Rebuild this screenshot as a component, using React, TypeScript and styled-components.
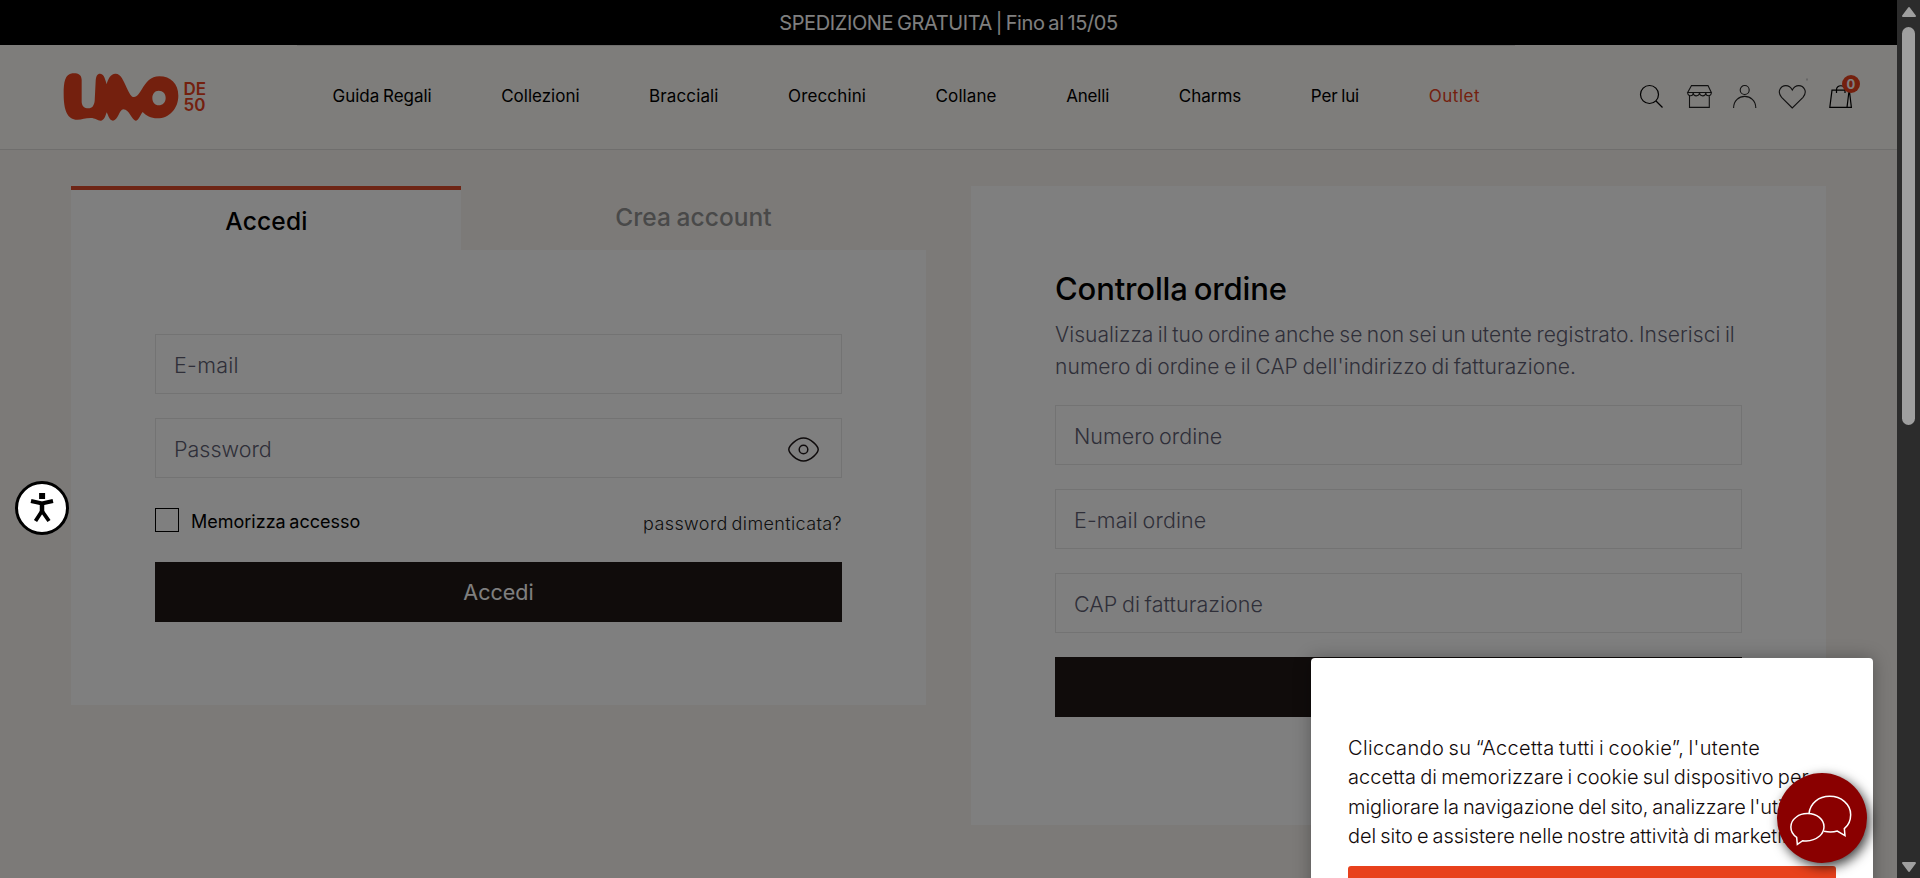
import React from "react";
import styled, { createGlobalStyle } from "styled-components";

const ORANGE = "#e8411c";

const GlobalStyle = createGlobalStyle`
  * { box-sizing: border-box; }
  body { margin: 0; overflow: hidden; font-family: Inter, "Liberation Sans", sans-serif; color: #000; }
  h1, h2, p { margin: 0; font-weight: 500; }
  svg { display: block; overflow: visible; }
`;

const Screen = styled.div`
  display: grid;
  grid-template-columns: 1897px 23px;
  width: 1920px;
  height: 878px;
  overflow: hidden;
`;

const Page = styled.div`
  position: relative;
  height: 878px;
  background: #f8f5f1;
  overflow: hidden;
`;

const PromoBar = styled.div`
  display: flex;
  align-items: center;
  justify-content: center;
  height: 45px;
  background: #000;
  color: #fff;
  font-size: 20px;
  font-weight: 400;
  letter-spacing: -0.38px;
  word-spacing: -1.5px;
`;

const Header = styled.header`
  display: flex;
  align-items: stretch;
  height: 105px;
  padding-left: 50px;
  background: #fdfaf6;
  border-bottom: 1px solid #dedcda;
`;

const LogoLink = styled.a`
  width: 247px;
  padding-top: 15px;
`;

const Nav = styled.nav`
  display: flex;
  align-items: center;
  gap: 69.5px;
  width: 1218px;
  padding: 0 0 3px 35.5px;
  border-top: 1px solid #dedcda;
`;

const NavLink = styled.a<{ $track?: number; $accent?: boolean }>`
  font-size: 17px;
  font-weight: 400;
  white-space: nowrap;
  word-spacing: -1px;
  letter-spacing: ${(p) => p.$track ?? 0}px;
  color: ${(p) => (p.$accent ? ORANGE : "#000")};
`;

const Tools = styled.div`
  display: grid;
  grid-template-columns: 47px 46px 46px 50px 24px;
  margin-left: 125px;
  padding-top: 40px;
`;

const BagHolder = styled.div`
  position: relative;
`;

const Badge = styled.span`
  position: absolute;
  top: -10px;
  left: 13px;
  display: flex;
  align-items: center;
  justify-content: center;
  width: 18px;
  height: 18px;
  border-radius: 50%;
  background: ${ORANGE};
  color: #fff;
  font-size: 13px;
  font-weight: 700;
`;

const Main = styled.main`
  display: grid;
  grid-template-columns: 855px 855px;
  gap: 45px;
  align-items: start;
  padding: 36px 71px 0;
`;

const Tabs = styled.div`
  display: grid;
  grid-template-columns: 390px 465px;
  height: 64px;
`;

const Tab = styled.button<{ $active?: boolean }>`
  display: flex;
  align-items: center;
  justify-content: center;
  border: 0;
  border-top: ${(p) => (p.$active ? `4px solid #dc4a2b` : "0")};
  padding: ${(p) => (p.$active ? "1px 0 0 1px" : "0 0 2px")};
  background: ${(p) => (p.$active ? "#fff" : "transparent")};
  color: ${(p) => (p.$active ? "#000" : "#939393")};
  font: 500 24.5px Inter, sans-serif;
  letter-spacing: ${(p) => (p.$active ? 0.2 : 0.05)}px;
  word-spacing: -1px;
`;

const LoginCard = styled.form`
  display: flex;
  flex-direction: column;
  height: 455px;
  padding: 84px 84px 0;
  background: #fff;
`;

const OrderCard = styled.form`
  display: flex;
  flex-direction: column;
  height: 639px;
  padding: 84px 84px 0;
  background: #fff;
`;

const Field = styled.label`
  display: flex;
  align-items: center;
  height: 60px;
  margin-bottom: 24px;
  padding: 2px 22.5px 0 18px;
  border: 1px solid #e6e6e6;
`;

const Input = styled.input<{ $track?: number }>`
  flex: 1;
  min-width: 0;
  padding: 0;
  border: 0;
  outline: 0;
  background: none;
  font: 300 21.5px Inter, sans-serif;
  letter-spacing: ${(p) => p.$track ?? 0}px;
  word-spacing: -1.5px;
  &::placeholder { color: #5e5e72; opacity: 1; }
`;

const Options = styled.div`
  display: flex;
  align-items: center;
  height: 30px;
  margin: 4px 0 26px;
  font-size: 18px;
`;

const Checkbox = styled.span`
  width: 24px;
  height: 24px;
  margin: 0 12px 3px 0;
  border: 1px solid #000;
`;

const Remember = styled.span`
  padding-top: 1px;
  font-weight: 400;
  letter-spacing: 0;
  word-spacing: -1.5px;
`;

const Forgot = styled.a`
  margin-left: auto;
  padding-top: 4px;
  color: #222;
  font-weight: 300;
  letter-spacing: 0.38px;
  word-spacing: -1.5px;
`;

const Submit = styled.button`
  flex: none;
  height: 60px;
  border: 0;
  background: #201816;
  color: #fff;
  font: 400 21.5px Inter, sans-serif;
`;

const Title = styled.h1`
  height: 48px;
  font-size: 31px;
  line-height: 38px;
  font-weight: 500;
  letter-spacing: -0.15px;
  word-spacing: -2px;
`;

const Intro = styled.p`
  height: 87px;
  padding-top: 1px;
  color: #5e5e72;
  font-size: 21px;
  font-weight: 300;
  line-height: 32px;
`;

const Line = styled.span<{ $track: number }>`
  display: block;
  white-space: nowrap;
  word-spacing: -1.5px;
  letter-spacing: ${(p) => p.$track}px;
`;

const Overlay = styled.div`
  position: absolute;
  inset: 0;
  background: rgba(0, 0, 0, 0.5);
`;

const CookieBanner = styled.section`
  position: absolute;
  left: 1311px;
  top: 658px;
  width: 562px;
  height: 260px;
  padding: 76px 37px 0;
  border-radius: 4px 4px 0 0;
  background: #fff;
  box-shadow: 0 0 18px rgba(0, 0, 0, 0.3);
`;

const CookieText = styled.p`
  height: 132px;
  color: #120a0a;
  font-size: 20px;
  font-weight: 300;
  line-height: 29.3px;
`;

const CookieAccept = styled.button`
  display: block;
  width: 488px;
  height: 50px;
  border: 0;
  border-radius: 3px;
  background: ${ORANGE};
`;

const ChatButton = styled.button`
  position: absolute;
  left: 1777px;
  top: 773px;
  width: 90px;
  height: 90px;
  padding: 0;
  border: 0;
  border-radius: 50%;
  background: #8a0000;
  box-shadow: 3px 4px 12px rgba(0, 0, 0, 0.75);
`;

const AccessButton = styled.button`
  position: absolute;
  left: 15px;
  top: 481px;
  width: 54px;
  height: 54px;
  padding: 0;
  border: 3px solid #000;
  border-radius: 50%;
  background: #fff;
`;

const Scrollbar = styled.div`
  display: flex;
  flex-direction: column;
  align-items: center;
  justify-content: space-between;
  padding: 6px 0 5px;
  background: #2c2c2c;
`;

const ScrollTop = styled.div`
  display: flex;
  flex-direction: column;
  align-items: center;
  gap: 9px;
`;

const Thumb = styled.div`
  width: 13px;
  height: 398px;
  border-radius: 7px;
  background: #9f9f9f;
`;

const LogoRow = styled.span`
  display: flex;
`;

const LogoSuffix = styled.span`
  display: grid;
  grid-template-rows: 15.5px 15.5px;
  align-content: start;
  padding: 22px 0 0 1px;
  color: ${ORANGE};
  font-size: 17px;
  font-weight: 600;
  line-height: 15px;
`;

const Logo = () => (
  <LogoRow>
    <svg width="132.5" height="70" viewBox="0 0 397.5 210" fill={ORANGE}>
      <path
        fillRule="evenodd"
        d="M41 101C41 66 45 43 67 40C84 39 94 43 95 59L95 126C96 139 103 145 115 145C127 145 132 137 134 123L137 63C138 47 142 41 150 41C160 41 164 51 170 73C174 56 182 42 196 41C212 40 220 61 230 83C238 99 243 111 252 111C262 111 268 99 276 87C288 67 302 49 328 49C362 49 385 71 385 107C385 145 358 175 322 175C302 175 288 167 278 156C270 166 266 182 257 182C246 182 238 148 220 148C208 148 204 182 189 182C178 182 175 166 170 157C166 169 162 182 152 182C142 182 136 174 122 174C106 174 96 179 82 179C52 179 41 151 41 101ZM326 92C314 92 307 102 307 114C307 127 315 136 326 136C338 136 347 127 347 114C347 101 339 92 326 92Z"
      />
    </svg>
    <LogoSuffix><span>DE</span><span>50</span></LogoSuffix>
  </LogoRow>
);

const SearchIcon = () => (
  <svg width="24" height="24" fill="none" stroke="#000" strokeWidth="1.2">
    <circle cx="9.5" cy="9.5" r="9" />
    <path d="M16 16L22.5 22.5" />
  </svg>
);

const StoreIcon = () => (
  <svg width="26" height="24" fill="none" stroke="#222" strokeWidth="1.1">
    <path d="M4.5.6H21L24.3 7.5H.7ZM2.5 10V22.4H22.3V10M.7 7.5C.5 11.8 6 11.8 6.2 8C6.5 11.8 12 11.8 12.5 8C13 11.8 18.5 11.8 18.8 8C19 11.8 24.5 11.8 24.3 7.5" />
  </svg>
);

const UserIcon = () => (
  <svg width="24" height="24" fill="none" stroke="#222" strokeWidth="1.1">
    <circle cx="11.7" cy="5" r="4.5" />
    <path d="M.6 23C.6 7.5 22.8 7.5 22.8 23" />
  </svg>
);

const HeartIcon = () => (
  <svg width="27" height="24" fill="none" stroke="#222" strokeWidth="1.1">
    <path d="M13.3 23L2.6 12.3C-2.5 6.5 2 .6 6.8.6C10 .6 11.8 2 13.3 5C14.8 2 16.6.6 19.8.6C24.6.6 29 6.5 24 12.3Z" />
    <path d="M27 -5.5h2" stroke="#ccc" strokeWidth="2" />
  </svg>
);

const BagIcon = () => (
  <svg width="24" height="24" fill="none" stroke="#000" strokeWidth="1.2">
    <path d="M3 5.2H20.3L22.4 22.4H.8ZM20 6L18 22.4M7.5 8V4.5C7.5-.5 16-.5 16 4.5V8" />
  </svg>
);

const EyeIcon = () => (
  <svg width="31" height="25" fill="none" stroke="#1e1718" strokeWidth="1.5">
    <path d="M.8 12.5C.8 9.5 8 1 15.5 1S30.2 9.5 30.2 12.5S23 24 15.5 24S.8 15.5.8 12.5Z" />
    <circle cx="15.5" cy="12.5" r="4.3" />
  </svg>
);

const ChatIcon = () => (
  <svg width="90" height="90" viewBox="111 129 270 270" fill="none" stroke="#fff" strokeWidth="4.5">
    <path d="M207 251C210 220 236 199 269 199C304 199 332 223 332 254C332 272 325 286 313 296L315 317L292 303C280 307 266 307 252 304" />
    <path d="M170 322C146 306 148 276 169 261C188 246 219 248 238 262C257 278 256 302 239 318C227 328 208 335 188 332L172 343Z" />
  </svg>
);

const PersonIcon = () => (
  <svg width="48" height="48" viewBox="0 0 48 48" fill="none" stroke="#000">
    <path d="M21.1 9h6v6h-6z" fill="#000" stroke="none" />
    <path d="M13 17L24 19.5L35 17" strokeWidth="4" />
    <path d="M24 19V30" strokeWidth="4.5" />
    <path d="M24 27L17.5 37M24 27L31 37" strokeWidth="3.8" />
  </svg>
);

const navItems = [
  { label: "Guida Regali", track: -0.02 },
  { label: "Collezioni", track: 0 },
  { label: "Bracciali", track: 0.12 },
  { label: "Orecchini", track: 0.14 },
  { label: "Collane", track: 0.1 },
  { label: "Anelli", track: -0.15 },
  { label: "Charms", track: 0 },
  { label: "Per lui", track: -0.12 },
  { label: "Outlet", track: 0.55, accent: true },
];

const cookieLines = [
  { text: "Cliccando su “Accetta tutti i cookie”, l'utente", track: 0.33 },
  { text: "accetta di memorizzare i cookie sul dispositivo per", track: 0.06 },
  { text: "migliorare la navigazione del sito, analizzare l'utilizzo", track: -0.07 },
  { text: "del sito e assistere nelle nostre attività di marketing.", track: -0.03 },
];

export default function App() {
  return (
    <>
      <GlobalStyle />
      <Screen>
        <Page>
          <PromoBar>SPEDIZIONE GRATUITA | Fino al 15/05</PromoBar>
          <Header>
            <LogoLink><Logo /></LogoLink>
            <Nav>
              {navItems.map((n) => (
                <NavLink key={n.label} $track={n.track} $accent={n.accent}>{n.label}</NavLink>
              ))}
            </Nav>
            <Tools>
              <SearchIcon />
              <StoreIcon />
              <UserIcon />
              <HeartIcon />
              <BagHolder>
                <BagIcon />
                <Badge>0</Badge>
              </BagHolder>
            </Tools>
          </Header>
          <Main>
            <section>
              <Tabs>
                <Tab $active>Accedi</Tab>
                <Tab>Crea account</Tab>
              </Tabs>
              <LoginCard>
                <Field><Input placeholder="E-mail" $track={0.3} /></Field>
                <Field>
                  <Input placeholder="Password" />
                  <EyeIcon />
                </Field>
                <Options>
                  <Checkbox />
                  <Remember>Memorizza accesso</Remember>
                  <Forgot>password dimenticata?</Forgot>
                </Options>
                <Submit type="button">Accedi</Submit>
              </LoginCard>
            </section>
            <OrderCard>
              <Title>Controlla ordine</Title>
              <Intro>
                <Line $track={0.05}>Visualizza il tuo ordine anche se non sei un utente registrato. Inserisci il</Line>
                <Line $track={0.1}>numero di ordine e il CAP dell'indirizzo di fatturazione.</Line>
              </Intro>
              <Field><Input placeholder="Numero ordine" $track={0.02} /></Field>
              <Field><Input placeholder="E-mail ordine" $track={0.12} /></Field>
              <Field><Input placeholder="CAP di fatturazione" $track={0.04} /></Field>
              <Submit type="button" />
            </OrderCard>
          </Main>
          <Overlay />
          <AccessButton><PersonIcon /></AccessButton>
          <CookieBanner>
            <CookieText>
              {cookieLines.map((l) => <Line key={l.text} $track={l.track}>{l.text}</Line>)}
            </CookieText>
            <CookieAccept />
          </CookieBanner>
          <ChatButton><ChatIcon /></ChatButton>
        </Page>
        <Scrollbar>
          <ScrollTop>
            <svg width="16" height="12" fill="#9f9f9f" stroke="#9f9f9f" strokeWidth="2" strokeLinejoin="round"><path d="M8 2L14 10H2Z" /></svg>
            <Thumb />
          </ScrollTop>
          <svg width="16" height="12" fill="#9f9f9f" stroke="#9f9f9f" strokeWidth="2" strokeLinejoin="round"><path d="M8 10L14 2H2Z" /></svg>
        </Scrollbar>
      </Screen>
    </>
  );
}
